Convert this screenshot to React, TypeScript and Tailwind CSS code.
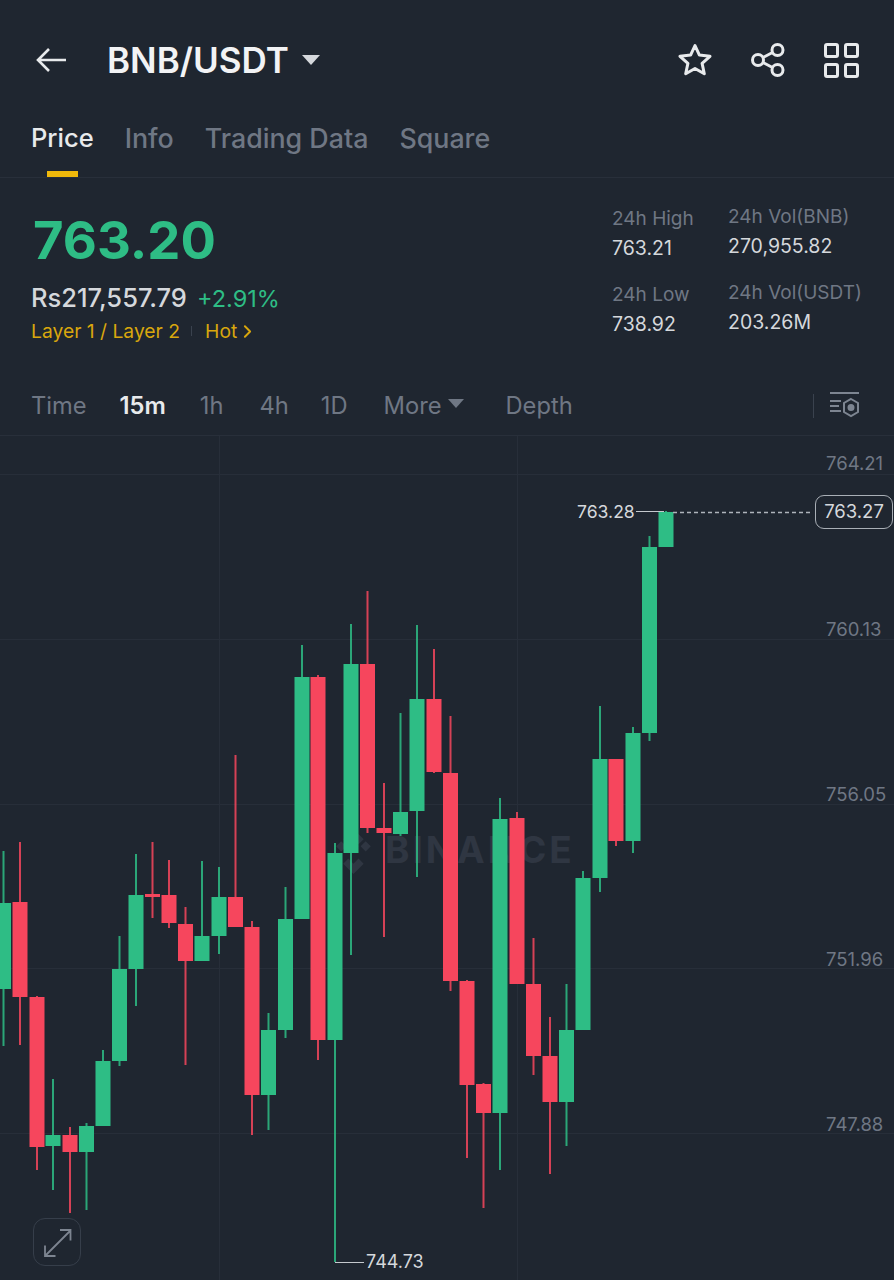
import React from 'react';
import { ChevronRight } from 'lucide-react';

// x, colour, wick top, body top, body bottom, wick bottom (page pixels)
type Candle = [number, 'g' | 'r', number, number, number, number];

const candles: Candle[] = [
  [3.5, 'g', 851, 903, 989, 1046],
  [20, 'r', 842, 902, 997, 1045],
  [37, 'r', 996, 997, 1147, 1170],
  [53, 'g', 1079, 1135, 1146, 1190],
  [70, 'r', 1127, 1135, 1152, 1213],
  [86.5, 'g', 1123, 1126, 1152, 1210],
  [103, 'g', 1050, 1061, 1126, 1126],
  [119.5, 'g', 936, 969, 1061, 1066],
  [136, 'g', 854, 895, 969, 1006],
  [152.5, 'r', 842, 894, 897, 918],
  [169, 'r', 860, 895, 923, 928],
  [185.5, 'r', 907, 924, 961, 1065],
  [202, 'g', 861, 936, 961, 954],
  [219, 'g', 867, 897, 936, 954],
  [235.5, 'r', 755, 897, 927, 927],
  [252, 'r', 921, 927, 1095, 1135],
  [268.5, 'g', 1013, 1030, 1095, 1130],
  [285.5, 'g', 887, 919, 1030, 1038],
  [302, 'g', 645, 677, 919, 919],
  [318, 'r', 675, 677, 1040, 1060],
  [335, 'g', 843, 853, 1040, 1262],
  [351, 'g', 624, 664, 853, 955],
  [367.5, 'r', 591, 664, 828, 833],
  [384, 'r', 783, 828, 833, 937],
  [400.5, 'g', 713, 812, 834, 836],
  [417, 'g', 625, 699, 811, 877],
  [434, 'r', 649, 699, 772, 773],
  [450.5, 'r', 716, 773, 981, 991],
  [467, 'r', 980, 981, 1085, 1158],
  [483.5, 'r', 1083, 1084, 1113, 1208],
  [500, 'g', 798, 819, 1113, 1170],
  [517, 'r', 812, 818, 984, 984],
  [533.5, 'r', 938, 984, 1056, 1075],
  [550, 'r', 1017, 1056, 1102, 1174],
  [566.5, 'g', 984, 1030, 1102, 1146],
  [583, 'g', 871, 878, 1030, 1030],
  [600, 'g', 706, 759, 878, 892],
  [616, 'r', 759, 759, 841, 846],
  [633, 'g', 727, 733, 841, 853],
  [649.5, 'g', 536, 547, 733, 741],
  [666, 'g', 511, 512, 547, 547],
];

const axisPrices = [
  { label: '764.21', top: 16 },
  { label: '760.13', top: 182 },
  { label: '756.05', top: 347 },
  { label: '751.96', top: 512 },
  { label: '747.88', top: 677 },
];

const Stat = ({ label, value, className }: { label: string; value: string; className?: string }) => (
  <div className={className}>
    <div className="text-[19px] leading-[24px] text-[#6f7784]">{label}</div>
    <div className="mt-[5px] text-[19.5px] leading-[24px] text-[#d5d8dc]">{value}</div>
  </div>
);

export default function App() {
  return (
    <div className="w-[894px] h-[1280px] overflow-hidden bg-[#1f2630] font-['Inter',sans-serif]">
      {/* Header */}
      <div className="h-[120px] pl-[36px] pr-[35px] flex items-center">
        <svg width="31" height="26" viewBox="0 0 31 26" fill="none" stroke="#e8eaec" strokeWidth="2.6">
          <path d="M2 13H30M13 2L2 13L13 24" />
        </svg>
        <span className="ml-[40px] text-[35px] font-semibold leading-none text-[#f2f3f5]">BNB/USDT</span>
        <span className="ml-[13px] w-0 h-0 border-l-[9px] border-r-[9px] border-t-[10px] border-l-transparent border-r-transparent border-t-[#d5d8dc]" />
        <div className="ml-auto flex items-center gap-[39px]">
          <svg width="34" height="34" viewBox="0 0 34 34" fill="none" stroke="#e8eaec" strokeWidth="3" strokeLinejoin="round">
            <path d="M17 2.500l4.400 9.600 10.600 1.200-7.900 7.100 2.200 10.400-9.300-5.300-9.300 5.300 2.200-10.400-7.900-7.100 10.600-1.200z" />
          </svg>
          <svg width="34" height="34" viewBox="0 0 34 34" fill="none" stroke="#e8eaec" strokeWidth="3">
            <circle cx="26.500" cy="7" r="5.500" />
            <circle cx="26.500" cy="27" r="5.500" />
            <circle cx="7" cy="17" r="5.500" />
            <path d="M12 14.500L21.500 9.500M12 19.500L21.500 24.500" />
          </svg>
          <svg width="35" height="35" viewBox="0 0 35 35" fill="none" stroke="#e8eaec" strokeWidth="3">
            <rect x="1.500" y="1.500" width="12" height="12" rx="1.500" />
            <rect x="21.500" y="1.500" width="12" height="12" rx="1.500" />
            <rect x="1.500" y="21.500" width="12" height="12" rx="1.500" />
            <rect x="21.500" y="21.500" width="12" height="12" rx="1.500" />
          </svg>
        </div>
      </div>

      {/* Tabs */}
      <div className="h-[58px] px-[31px] border-b border-[#282f3a] flex gap-[31px] text-[26.8px] leading-[36px] font-medium text-[#6f7784]">
        <div className="relative h-full text-[25.5px] text-[#e8eaec]">
          Price
          <span className="absolute left-[16px] bottom-0 w-[31px] h-[6px] bg-[#f0b90b]" />
        </div>
        <div>Info</div>
        <div>Trading Data</div>
        <div>Square</div>
      </div>

      {/* Price summary */}
      <div className="h-[192px] pl-[31px] flex">
        <div className="w-[581px] pt-[30px]">
          <div className="pl-[2px] text-[52.6px] leading-[64px] font-bold text-[#2ebd85]">763.20</div>
          <div className="mt-[12px] flex items-baseline gap-[10px] leading-[28px]">
            <span className="text-[25.5px] font-medium text-[#d5d8dc]">Rs217,557.79</span>
            <span className="text-[23.5px] text-[#2ebd85]">+2.91%</span>
          </div>
          <div className="mt-[6px] flex items-center text-[19.3px] leading-[24px] text-[#d9a70d]">
            <span>Layer 1 / Layer 2</span>
            <span className="ml-[11px] w-px h-[10px] bg-[#3a424e]" />
            <span className="ml-[13px]">Hot</span>
            <ChevronRight size={21} strokeWidth={2.2} />
          </div>
        </div>
        <div className="pt-[29px] w-[116px]">
          <Stat label="24h High" value="763.21" />
          <Stat label="24h Low" value="738.92" className="mt-[23px]" />
        </div>
        <div className="pt-[27px]">
          <Stat label="24h Vol(BNB)" value="270,955.82" />
          <Stat label="24h Vol(USDT)" value="203.26M" className="mt-[23px]" />
        </div>
      </div>

      {/* Interval bar */}
      <div className="h-[66px] pl-[31px] pr-[34px] pt-[6px] border-b border-[#282f3a] flex items-center text-[23.7px] text-[#6f7784]">
        <span>Time</span>
        <span className="ml-[33px] font-semibold text-[#e8eaec]">15m</span>
        <span className="ml-[34px]">1h</span>
        <span className="ml-[36px]">4h</span>
        <span className="ml-[32px]">1D</span>
        <span className="ml-[36px]">More</span>
        <span className="ml-[7px] mb-[4px] w-0 h-0 border-l-[8px] border-r-[8px] border-t-[9px] border-l-transparent border-r-transparent border-t-[#6f7784]" />
        <span className="ml-[41px]">Depth</span>
        <span className="ml-auto w-px h-[24px] bg-[#3a424e]" />
        <svg className="ml-[15px]" width="31" height="30" viewBox="0 0 31 30" fill="none" stroke="#7d8591" strokeWidth="2">
          <path d="M1 2h29M1 10h11M1 15h9M1 20h11" />
          <path d="M22 8l7 4v9l-7 4-7-4v-9z" />
          <circle cx="22" cy="16.500" r="2.500" fill="#7d8591" />
        </svg>
      </div>

      {/* Chart */}
      <div className="relative h-[844px] overflow-hidden">
        <svg className="absolute inset-0" width="894" height="844" viewBox="0 436 894 844">
          <g stroke="#272e39" strokeWidth="1">
            <path d="M0 474.500H894M0 639.500H894M0 804.500H894M0 968.500H894M0 1133.500H894M219.500 436V1280M517.500 436V1280" />
          </g>
          <g fill="#2f3642" transform="translate(331 829) scale(1.020)">
            <path d="M22 0l10 10-5 5-5-5-5 5-5-5zM5 17l5-5 5 5-5 5zM17 17l5-5 5 5-5 5zM29 17l5-5 5 5-5 5zM17 29l5 5 5-5 5 5-10 10-10-10 5-5z" />
          </g>
          <text x="385" y="863" fontSize="37" fontWeight="700" letterSpacing="3" fill="#2f3642" fontFamily="Inter, sans-serif">BINANCE</text>
          {candles.map(([x, color, wickTop, bodyTop, bodyBottom, wickBottom]) => {
            const fill = color === 'g' ? '#2ebd85' : '#f6465d';
            return (
              <g key={x}>
                <rect x={x - 1} y={wickTop} width="2" height={wickBottom - wickTop} fill={fill} opacity="0.85" />
                <rect x={x - 7.500} y={bodyTop} width="15" height={bodyBottom - bodyTop} fill={fill} />
              </g>
            );
          })}
          <path d="M636 511.500H664M335 1262.500H364" stroke="#c5c9ce" strokeWidth="1" />
          <path d="M673 512.500H811" stroke="#aeb4bb" strokeWidth="1.500" strokeDasharray="4 3" />
          <g fill="none" stroke="#7d8591" strokeWidth="1.800">
            <path d="M46 1255l24-24M60 1230h10.500v10.500M45 1245.500v10.500h10.500" />
          </g>
        </svg>

        {axisPrices.map(p => (
          <span
            key={p.label}
            className="absolute left-[826px] text-[18.5px] leading-[22px] text-[#6f7784]"
            style={{ top: p.top }}
          >
            {p.label}
          </span>
        ))}

        <span className="absolute left-[577px] top-[65px] text-[17.6px] leading-[22px] text-[#d5d8dc]">763.28</span>
        <span className="absolute left-[366px] top-[815px] text-[18px] leading-[22px] text-[#d5d8dc]">744.73</span>
        <span className="absolute left-[815px] top-[59px] w-[78px] h-[34px] flex items-center justify-center rounded-[9px] border border-[#a9afb6] text-[18.5px] text-[#d5d8dc]">
          763.27
        </span>
        <span className="absolute left-[33px] top-[782px] w-[48px] h-[48px] rounded-[12px] border border-[#363e4a]" />
      </div>
    </div>
  );
}
